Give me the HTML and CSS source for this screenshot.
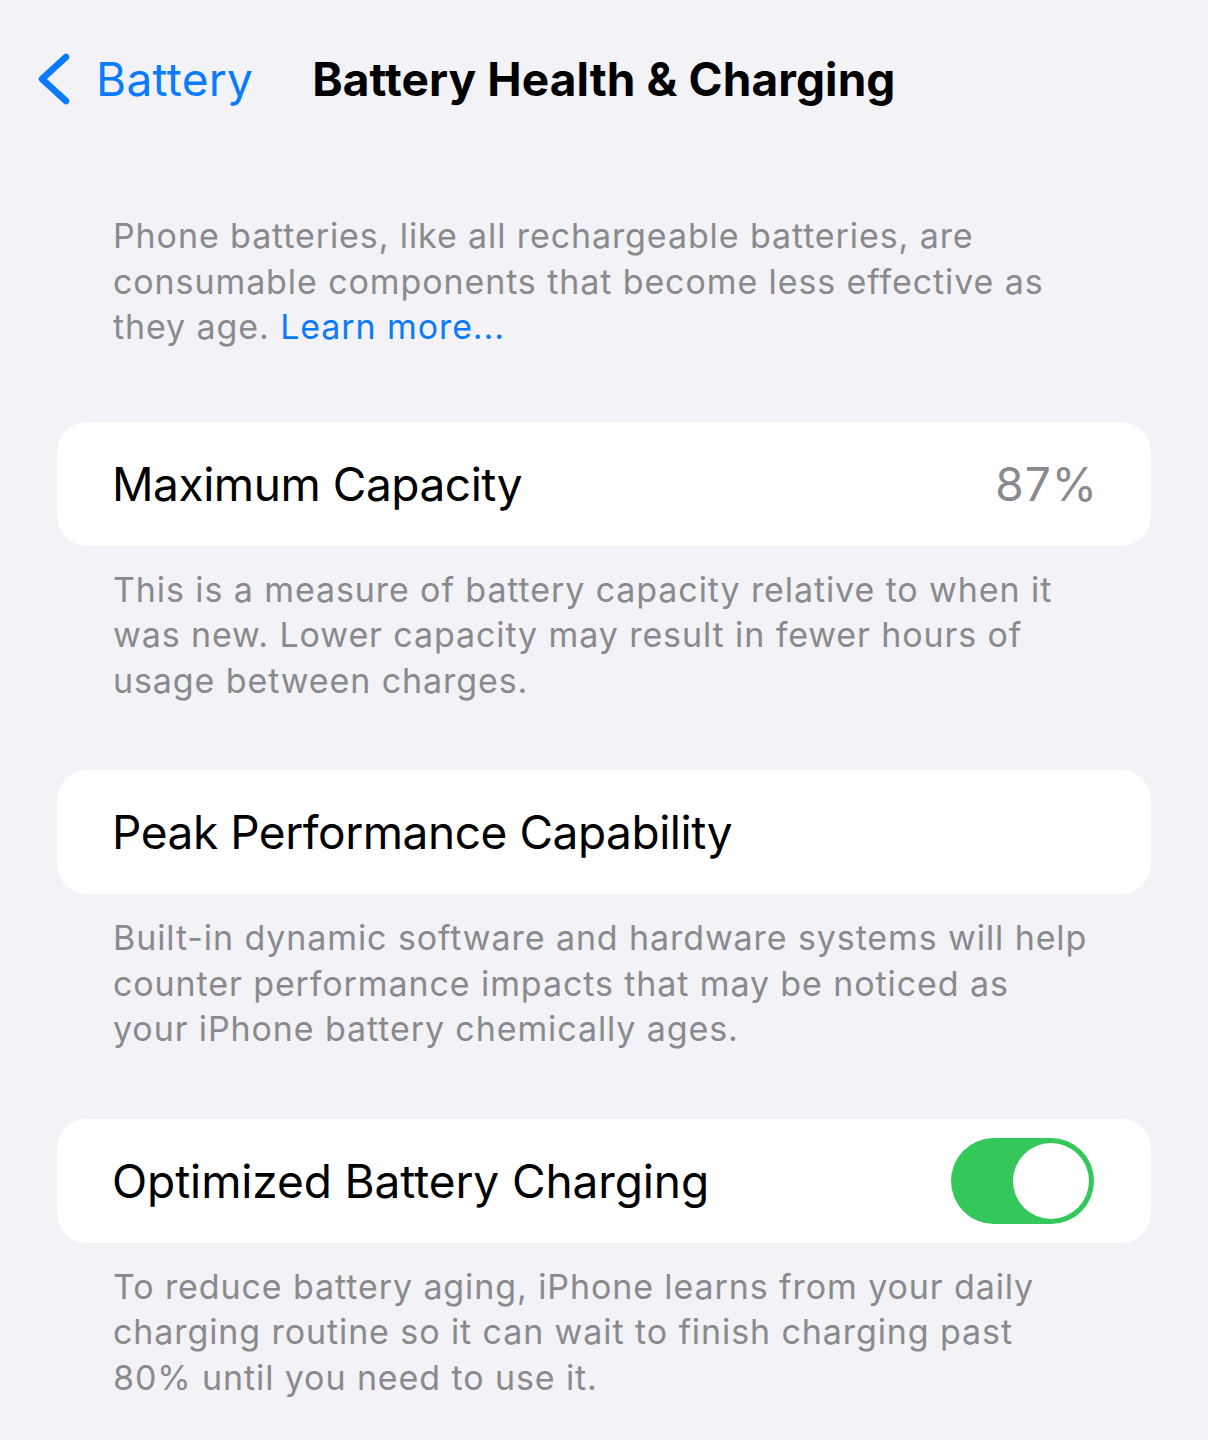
FILE: index.html
```html
<!DOCTYPE html>
<html>
	<head>
		<meta charset="utf-8">
		<title>Battery Health &amp; Charging</title>
		<link rel="stylesheet" href="styles.css">
	</head>
	<body>
		<div class="screen">
			<div class="navbar">
				<a class="back">
					<svg class="chevron" viewBox="0 0 36 52" width="36" height="52">
						<path d="M30 4 L6 26 L30 48" fill="none" stroke="#0a7aff" stroke-width="6.5" stroke-linecap="round" stroke-linejoin="round"/>
					</svg>
					<span class="back-label">Battery</span>
				</a>
				<h1 class="title">Battery Health &amp; Charging</h1>
			</div>

			<p class="footer intro">Phone batteries, like all rechargeable batteries, are consumable components that become less effective as they age. <a class="link">Learn more...</a></p>

			<div class="section">
				<div class="cell">
					<span class="cell-label">Maximum Capacity</span>
					<span class="cell-value">87%</span>
				</div>
				<p class="footer">This is a measure of battery capacity relative to when it was new. Lower capacity may result in fewer hours of usage between charges.</p>
			</div>

			<div class="section">
				<div class="cell">
					<span class="cell-label">Peak Performance Capability</span>
				</div>
				<p class="footer">Built-in dynamic software and hardware systems will help counter performance impacts that may be noticed as your iPhone battery chemically ages.</p>
			</div>

			<div class="section">
				<div class="cell">
					<span class="cell-label wide">Optimized Battery Charging</span>
					<div class="toggle on"><div class="knob"></div></div>
				</div>
				<p class="footer">To reduce battery aging, iPhone learns from your daily charging routine so it can wait to finish charging past 80% until you need to use it.</p>
			</div>
		</div>
	</body>
</html>
```

FILE: styles.css
```css
body{
	margin: 0;
	background: #f2f2f7;
	font-family: Inter, "Noto Sans", sans-serif;
	color: #000;
}

.screen{
	width: 1208px;
	height: 1440px;
	overflow: hidden;
}

.navbar{
	display: flex;
	align-items: center;
	height: 158px;
	padding-left: 36px;
}

.back{
	display: flex;
	align-items: center;
	color: #0a7aff;
}

.chevron{
	margin-right: 24px;
}

.back-label{
	font-size: 46px;
	letter-spacing: 0.3px;
}

.title{
	margin: 0 0 0 59px;
	font-size: 46px;
	font-weight: 700;
	letter-spacing: 0.1px;
}

.footer{
	margin: 0;
	padding: 0 119px 0 113px;
	font-size: 34px;
	line-height: 45.5px;
	color: #8a8a8e;
	letter-spacing: 0.9px;
}

.intro{
	padding-top: 55px;
	margin-bottom: 72px;
}

.link{
	color: #0a7aff;
}

.section{
	margin-bottom: 67px;
}

.section .footer{
	margin-top: 21px;
}

.cell{
	display: flex;
	align-items: center;
	justify-content: space-between;
	height: 124px;
	margin: 0 57px;
	padding: 0 57px 0 55px;
	background: #fff;
	border-radius: 30px;
}

.cell-label{
	font-size: 46px;
	letter-spacing: -0.45px;
}

.cell-label.wide{
	letter-spacing: -0.1px;
}

.cell-value{
	margin-right: -4px;
	font-size: 46px;
	letter-spacing: 1px;
	color: #8a8a8e;
}

.toggle{
	position: relative;
	width: 143px;
	height: 86px;
	border-radius: 43px;
	background: #e9e9ea;
}

.toggle.on{
	background: #34c759;
}

.knob{
	position: absolute;
	top: 5px;
	right: 5px;
	width: 76px;
	height: 76px;
	border-radius: 50%;
	background: #fff;
}
```
